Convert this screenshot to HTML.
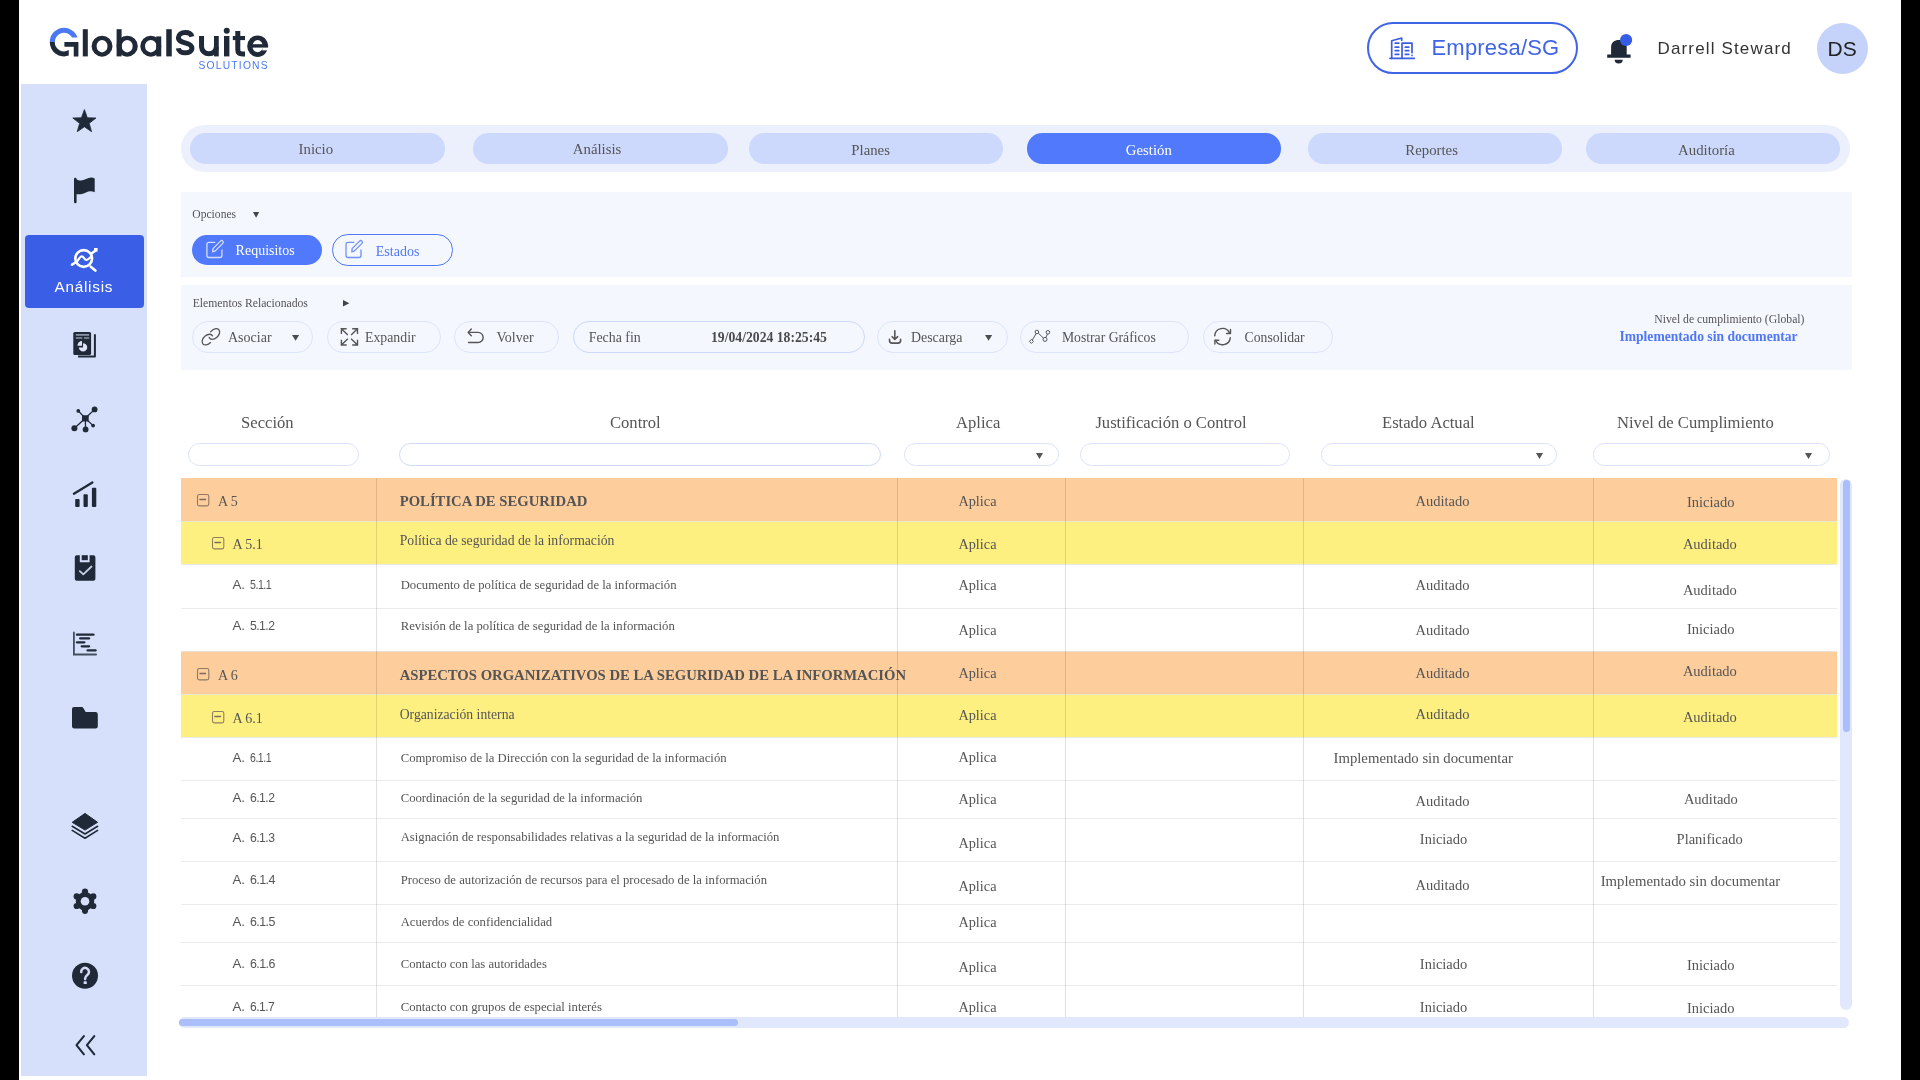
<!DOCTYPE html><html><head><meta charset="utf-8"><title>GlobalSuite</title><style>html,body{margin:0;padding:0;width:1920px;height:1080px;overflow:hidden;background:#fff;position:relative;}body{font-family:"Liberation Sans",sans-serif;}</style></head><body><div style="position:absolute;left:0;top:0;width:1920px;height:1080px;will-change:transform;"><div style="position:absolute;left:0px;top:0px;width:19px;height:1080px;background:#000;"></div>
<div style="position:absolute;left:1901px;top:0px;width:19px;height:1080px;background:#000;"></div>
<svg style="position:absolute;left:40px;top:20px;" width="240" height="45" viewBox="40 20 240 45"><path d="M49.75 42.1 A14.3 14.3 0 0 1 77.62 37.6 L72.19 37.6 A9.3 9.3 0 0 0 54.75 42.1 Z" fill="#4a78f5"/><path d="M49.75 42.1 A14.3 14.3 0 0 0 68.75 55.6 L68.75 50.1 A9.3 9.3 0 0 1 54.75 42.1 Z" fill="#1f2937"/><path d="M64.4 42.1 H78.4 V56.4 H73.75 V46.7 H64.4 Z" fill="#1f2937"/><rect x="82.8" y="29.2" width="5" height="27.2" fill="#1f2937"/><path fill-rule="evenodd" d="M91.6 46.2 A10.45 10.5 0 1 0 112.5 46.2 A10.45 10.5 0 1 0 91.6 46.2 Z M96.6 46.2 A5.45 6.25 0 1 0 107.5 46.2 A5.45 6.25 0 1 0 96.6 46.2 Z " fill="#1f2937"/><rect x="116.6" y="29.2" width="5" height="27.2" fill="#1f2937"/><path fill-rule="evenodd" d="M116.60000000000001 46.2 A10.6 10.5 0 1 0 137.8 46.2 A10.6 10.5 0 1 0 116.60000000000001 46.2 Z M121.75 46.2 A5.45 6.25 0 1 0 132.65 46.2 A5.45 6.25 0 1 0 121.75 46.2 Z " fill="#1f2937"/><path fill-rule="evenodd" d="M140.3 46.2 A10.5 10.5 0 1 0 161.3 46.2 A10.5 10.5 0 1 0 140.3 46.2 Z M145.0 46.2 A5.8 6.25 0 1 0 156.60000000000002 46.2 A5.8 6.25 0 1 0 145.0 46.2 Z " fill="#1f2937"/><rect x="156.25" y="36.4" width="5" height="20" fill="#1f2937"/><rect x="166.25" y="29.2" width="5.5" height="27.2" fill="#1f2937"/><path d="M191.9 36.6 C191.2 34 188.5 32.6 185.2 32.6 C181.3 32.6 178.4 34.6 178.4 37.6 C178.4 41.2 181.8 42 185.2 42.9 C188.8 43.8 191.9 45 191.9 48.3 C191.9 51.2 189.1 52.8 185.2 52.8 C181.5 52.8 178.6 51 178.3 48.3" fill="none" stroke="#1f2937" stroke-width="5"/><path d="M201.55 36 V47 A7.42 7.2 0 0 0 216.37 47" fill="none" stroke="#1f2937" stroke-width="5"/><rect x="214" y="36" width="4.75" height="20.4" fill="#1f2937"/><rect x="224" y="36" width="5.4" height="20.4" fill="#1f2937"/><circle cx="226.75" cy="30.75" r="3" fill="#1f2937"/><path d="M237.8 31 V49.5 C237.8 53 239.5 53.9 242.5 53.9 H245" fill="none" stroke="#1f2937" stroke-width="5"/><rect x="232.8" y="36" width="12.2" height="4.1" fill="#1f2937"/><path fill-rule="evenodd" d="M247.2 46.2 A10.45 10.8 0 1 0 268.09999999999997 46.2 A10.45 10.8 0 1 0 247.2 46.2 Z M252.45 46.2 A5.2 6.1 0 1 0 262.84999999999997 46.2 A5.2 6.1 0 1 0 252.45 46.2 Z " fill="#1f2937"/><rect x="252" y="44.2" width="16.1" height="3.4" fill="#1f2937"/><rect x="262.3" y="47.6" width="7" height="2.8" fill="#fff"/></svg>
<div style="position:absolute;left:198.5px;top:61.1px;font-family:'Liberation Sans', sans-serif;font-size:10.3px;line-height:10.3px;font-weight:normal;color:#4a78f5;white-space:nowrap;letter-spacing:1.2px;">SOLUTIONS</div>
<div style="position:absolute;left:1367px;top:22px;width:207px;height:48px;border:2px solid #3f64e6;border-radius:26px;"></div>
<svg style="position:absolute;left:1385px;top:34px;" width="34" height="28" viewBox="1385 34 34 28"><g fill="none" stroke="#3a5de4" stroke-width="1.7" stroke-linecap="round" stroke-linejoin="round"><path d="M1390 58.3 H1414.3"/><path d="M1391.7 58.3 V40.7 L1401.7 38 V40.3"/><path d="M1402 58.3 V43.2 H1412 V52.7"/><path d="M1395.2 43.2 H1398.8 M1395.2 47.2 H1398.8 M1395.2 50.7 H1398.8 M1395.2 54.3 H1398.8"/><path d="M1405.3 47.2 H1408.8 M1405.3 50.7 H1408.8 M1405.3 54.3 H1408.8"/><path d="M1412 55.4 V55.5"/></g></svg>
<div style="position:absolute;left:1431.5px;top:36.66px;font-family:'Liberation Sans', sans-serif;font-size:22px;line-height:22px;font-weight:normal;color:#3f64e6;white-space:nowrap;letter-spacing:0.2px;">Empresa/SG</div>
<svg style="position:absolute;left:1600px;top:30px;" width="40" height="40" viewBox="1600 30 40 40"><path d="M1611.1 54.4 V47 C1611.1 42.5 1614.5 40 1618.9 40 C1623.3 40 1626.7 42.5 1626.7 47 V54.4 H1630.6 V57.8 H1607.2 V54.4 Z" fill="#1f2937"/><path d="M1614.6 59.8 H1622.8 A4.1 3.7 0 0 1 1614.6 59.8 Z" fill="#1f2937"/><circle cx="1626.1" cy="40" r="6.1" fill="#365de5"/></svg>
<div style="position:absolute;left:1657.5px;top:39.63px;font-family:'Liberation Sans', sans-serif;font-size:17px;line-height:17px;font-weight:normal;color:#333;white-space:nowrap;letter-spacing:1.15px;">Darrell Steward</div>
<div style="position:absolute;left:1816.5px;top:22.5px;width:51.5px;height:51.5px;border-radius:50%;background:#c5d3fb;"></div>
<div style="position:absolute;left:1827.5px;top:38.05px;font-family:'Liberation Sans', sans-serif;font-size:21px;line-height:21px;font-weight:normal;color:#222;white-space:nowrap;letter-spacing:0px;">DS</div>
<div style="position:absolute;left:21px;top:84px;width:126.3px;height:992.4px;background:#d6e0fb;"></div>
<div style="position:absolute;left:24.8px;top:235.3px;width:119.2px;height:73.1px;background:#3a5ee6;border-radius:4px;"></div>
<svg style="position:absolute;left:21px;top:84px;" width="127" height="993" viewBox="21 84 127 993"><polygon points="84.40,109.60 87.34,117.75 96.00,118.03 89.16,123.35 91.57,131.67 84.40,126.80 77.23,131.67 79.64,123.35 72.80,118.03 81.46,117.75" fill="#1f2937" stroke="#1f2937" stroke-width="0.8" stroke-linejoin="round"/><path d="M75.3 202 V179" stroke="#1f2937" stroke-width="2.6" stroke-linecap="round"/><path d="M75.3 178.4 C79 181.5 83 180.5 86 179 C89 177.5 92 177 94.7 178.4 V192.3 C92 191 89 191 86 192.5 C83 194 79 195 75.3 193.7 Z" fill="#1f2937"/><g fill="none" stroke="#fff" stroke-width="2.6" stroke-linecap="round" stroke-linejoin="round"><circle cx="83.7" cy="258.5" r="8.4"/><path d="M72 264.6 L75.5 262.5"/><path d="M91.5 253.5 L95 251"/><path d="M90.7 266.7 L95.4 270.6"/></g><path d="M76.8 262 C78.5 259.5 80 256.3 81.8 256.3 C83.6 256.3 84.5 260 86.2 260 C88 260 89.5 258 91.3 256.6" fill="none" stroke="#fff" stroke-width="2.2" stroke-linecap="round"/><rect x="94" y="248" width="3.6" height="3.6" fill="#fff"/><rect x="73.3" y="331.9" width="17.8" height="23.1" rx="1.6" fill="#1f2937"/><path d="M78 356.6 H94.9 V334.3" fill="none" stroke="#1f2937" stroke-width="2" stroke-linejoin="round"/><path d="M75.8 334.8 H89.2 M75.8 338 H82.3 M84 338 H89.2" stroke="#8c93a8" stroke-width="1.7"/><path d="M83.05 343.2 A4.2 4.2 0 1 1 78.85 347.4 L83.05 347.4 Z" fill="#dfe3fb"/><path d="M82 345.7 L77.4 345.7 A4.6 4.6 0 0 1 82 341.1 Z" fill="#dfe3fb"/><g fill="none" stroke="#1f2937" stroke-width="1.3"><path d="M78.3 410.9 L85.3 418.3 L94.6 409.4 M74.4 428.3 L85.3 418.3 L85.6 429.4 M85.3 418.3 L93.1 425.6"/></g><g fill="#1f2937"><rect x="82" y="415.2" width="6.7" height="6.3" rx="1"/><circle cx="78.3" cy="410.9" r="1.9"/><circle cx="94.6" cy="409.4" r="2.9"/><circle cx="74.4" cy="428.3" r="3"/><circle cx="85.6" cy="429.4" r="2.9"/><circle cx="93.1" cy="425.6" r="1.9"/></g><g fill="#1f2937"><rect x="75.2" y="499.1" width="4.4" height="7.8" rx="1"/><rect x="83.5" y="494.3" width="4.3" height="12.6" rx="1"/><rect x="91.9" y="487.8" width="4.4" height="19.1" rx="1"/></g><path d="M73.9 493.7 L92.4 482.4" stroke="#1f2937" stroke-width="2.3" stroke-linecap="round"/><path d="M76.8 555.2 H79.8 V562.3 H89.6 V555.2 H93.4 A2 2 0 0 1 95.4 557.2 V578.8 A2 2 0 0 1 93.4 580.8 H76.8 A2 2 0 0 1 74.8 578.8 V557.2 A2 2 0 0 1 76.8 555.2 Z" fill="#1f2937"/><rect x="81.7" y="555.2" width="6.1" height="5" fill="#1f2937"/><path d="M79.8 571.1 L83.3 574.3 L91.5 566.5" fill="none" stroke="#c9cfe3" stroke-width="1.8" stroke-linecap="round" stroke-linejoin="round"/><g fill="none" stroke="#1f2937" stroke-linecap="round"><path d="M73.9 632.3 V654.5 H96.1" stroke-width="1.8" stroke-opacity="0.8"/><path d="M76.9 634.7 H93.5 M80.2 638.4 H89.1 M76.9 642.3 H84.4 M81.7 646.3 H89.1 M87.6 650.4 H95.6" stroke-width="2.3"/></g><path d="M74 707.1 H81.5 C82.5 707.1 83 707.5 83.6 708.5 L85.7 712.1 H95.5 A2.3 2.3 0 0 1 97.8 714.4 V726.3 A2.3 2.3 0 0 1 95.5 728.6 H74.3 A2.3 2.3 0 0 1 72 726.3 V709.1 A2 2 0 0 1 74 707.1 Z" fill="#1f2937"/><path d="M85 813.4 L97.6 822.3 L85 830.1 L72.2 822.3 Z" fill="#1f2937" stroke="#1f2937" stroke-width="1" stroke-linejoin="round"/><path d="M72.2 826.3 L85 834 L97.6 826.3 M72.2 830.4 L85 838.2 L97.6 830.4" fill="none" stroke="#1f2937" stroke-width="1.6" stroke-linecap="round" stroke-linejoin="round"/><g fill="#1f2937"><circle cx="85" cy="901.2" r="9.2"/><circle cx="85.00" cy="891.60" r="3.1"/><circle cx="93.31" cy="896.40" r="3.1"/><circle cx="93.31" cy="906.00" r="3.1"/><circle cx="85.00" cy="910.80" r="3.1"/><circle cx="76.69" cy="906.00" r="3.1"/><circle cx="76.69" cy="896.40" r="3.1"/></g><circle cx="85" cy="901.2" r="4.3" fill="#d6e0fb"/><circle cx="85" cy="975.8" r="13" fill="#1f2937"/><path d="M81.2 972 A3.9 3.9 0 1 1 87.3 975 C85.6 976.2 85.1 977.2 85.1 979" fill="none" stroke="#d6dcf5" stroke-width="2.5" stroke-linecap="round"/><rect x="83.6" y="981.2" width="3.2" height="2.8" rx="0.6" fill="#d6dcf5"/><path d="M83.9 1036.1 L76.5 1045.2 L83.9 1054.3 M94.3 1036.1 L86.9 1045.2 L94.3 1054.3" fill="none" stroke="#1f2937" stroke-width="2.1" stroke-linecap="round" stroke-linejoin="round"/></svg>
<div style="position:absolute;left:54.5px;top:279.37px;font-family:'Liberation Sans', sans-serif;font-size:15.3px;line-height:15.3px;font-weight:normal;color:#fff;white-space:nowrap;letter-spacing:0.75px;">Análisis</div>
<div style="position:absolute;left:180.5px;top:125px;width:1669.0px;height:47px;background:#ecf0fd;border-radius:23.5px;"></div>
<div style="position:absolute;left:190.3px;top:133px;width:254.7px;height:30.7px;background:#cdd9fc;border-radius:15.349999999999994px;"></div>
<div style="position:absolute;left:298.6px;top:142.06px;font-family:'Liberation Serif', serif;font-size:14.8px;line-height:14.8px;font-weight:normal;color:#555;white-space:nowrap;">Inicio</div>
<div style="position:absolute;left:473.4px;top:133px;width:254.6px;height:30.7px;background:#cdd9fc;border-radius:15.349999999999994px;"></div>
<div style="position:absolute;left:572.8px;top:141.76px;font-family:'Liberation Serif', serif;font-size:14.8px;line-height:14.8px;font-weight:normal;color:#555;white-space:nowrap;">Análisis</div>
<div style="position:absolute;left:748.7px;top:133px;width:254.6px;height:30.7px;background:#cdd9fc;border-radius:15.349999999999994px;"></div>
<div style="position:absolute;left:851.3px;top:142.86px;font-family:'Liberation Serif', serif;font-size:14.8px;line-height:14.8px;font-weight:normal;color:#555;white-space:nowrap;">Planes</div>
<div style="position:absolute;left:1026.8px;top:133px;width:254.5px;height:30.7px;background:#5079fb;border-radius:15.349999999999994px;"></div>
<div style="position:absolute;left:1125.8px;top:142.86px;font-family:'Liberation Serif', serif;font-size:14.8px;line-height:14.8px;font-weight:normal;color:#fff;white-space:nowrap;">Gestión</div>
<div style="position:absolute;left:1307.5px;top:133px;width:254.3px;height:30.7px;background:#cdd9fc;border-radius:15.349999999999994px;"></div>
<div style="position:absolute;left:1405.3px;top:142.86px;font-family:'Liberation Serif', serif;font-size:14.8px;line-height:14.8px;font-weight:normal;color:#555;white-space:nowrap;">Reportes</div>
<div style="position:absolute;left:1585.5px;top:133px;width:254.3px;height:30.7px;background:#cdd9fc;border-radius:15.349999999999994px;"></div>
<div style="position:absolute;left:1678.1px;top:143.36px;font-family:'Liberation Serif', serif;font-size:14.8px;line-height:14.8px;font-weight:normal;color:#555;white-space:nowrap;">Auditoría</div>
<div style="position:absolute;left:180.8px;top:192px;width:1670.9px;height:84.9px;background:#f4f7fe;"></div>
<div style="position:absolute;left:192.3px;top:208.59px;font-family:'Liberation Serif', serif;font-size:11.6px;line-height:11.6px;font-weight:normal;color:#555;white-space:nowrap;">Opciones</div>
<svg style="position:absolute;left:251.70000000000002px;top:211px;" width="8.2" height="7.8" viewBox="251.70000000000002 211 8.2 7.8"><path d="M252.70000000000002 212 H258.90000000000003 L255.8 217.8 Z" fill="#444"/></svg>
<div style="position:absolute;left:191.9px;top:234.7px;width:129.7px;height:30.3px;background:#5079fb;border-radius:15.150000000000006px;"></div>
<svg style="position:absolute;left:200px;top:234px;" width="30" height="30" viewBox="200 234 30 30"><g fill="none" stroke="#fff" stroke-opacity="0.75" stroke-width="1.3" stroke-linecap="round" stroke-linejoin="round"><path d="M214.7 242.3 H209 A2.1 2.1 0 0 0 206.9 244.4 V255.4 A2.1 2.1 0 0 0 209 257.5 H219.8 A2.1 2.1 0 0 0 221.9 255.4 V249.8"/><path d="M212.7 251.9 L213 248.6 L220.5 241.1 A1.6 1.6 0 0 1 222.8 243.4 L215.3 250.9 Z"/></g></svg>
<div style="position:absolute;left:235.6px;top:243.72px;font-family:'Liberation Serif', serif;font-size:14.0px;line-height:14.0px;font-weight:normal;color:#fff;white-space:nowrap;transform:scaleY(1.05);transform-origin:0 100%;">Requisitos</div>
<div style="position:absolute;left:331.7px;top:234.2px;width:121.1px;height:31.6px;background:transparent;border-radius:15.800000000000011px;border:1px solid #4f77f6;box-sizing:border-box;"></div>
<svg style="position:absolute;left:339px;top:234px;" width="30" height="30" viewBox="339 234 30 30"><g fill="none" stroke="#4f77f6" stroke-opacity="0.8" stroke-width="1.3" stroke-linecap="round" stroke-linejoin="round"><path d="M353.8 242.3 H348.1 A2.1 2.1 0 0 0 346 244.4 V255.4 A2.1 2.1 0 0 0 348.1 257.5 H358.9 A2.1 2.1 0 0 0 361 255.4 V249.8"/><path d="M351.8 251.9 L352.1 248.6 L359.6 241.1 A1.6 1.6 0 0 1 361.9 243.4 L354.4 250.9 Z"/></g></svg>
<div style="position:absolute;left:375.8px;top:244.52px;font-family:'Liberation Serif', serif;font-size:14.0px;line-height:14.0px;font-weight:normal;color:#4f77f6;white-space:nowrap;transform:scaleY(1.05);transform-origin:0 100%;">Estados</div>
<div style="position:absolute;left:180.8px;top:284.8px;width:1670.9px;height:85.0px;background:#f4f7fe;"></div>
<div style="position:absolute;left:192.7px;top:297.71px;font-family:'Liberation Serif', serif;font-size:11.7px;line-height:11.7px;font-weight:normal;color:#555;white-space:nowrap;">Elementos Relacionados</div>
<svg style="position:absolute;left:342.3px;top:299.35px;" width="8.3" height="8.5" viewBox="342.3 299.35 8.3 8.5"><path d="M343.3 300.35 V306.85 L349.6 303.6 Z" fill="#444"/></svg>
<div style="position:absolute;left:191.7px;top:320.9px;width:121.5px;height:32.1px;background:transparent;border-radius:16.05000000000001px;border:1px solid #dde5fc;box-sizing:border-box;"></div>
<svg style="position:absolute;left:196px;top:320px;" width="30" height="30" viewBox="196 320 30 30"><g fill="none" stroke="#555" stroke-width="1.3" stroke-linecap="round"><path d="M210.6 331.85 A6.3 4.2 -45 1 1 209.2 337.46"/><path d="M212.47 335.86 A6.3 4.2 -45 1 0 210.47 342.57"/></g></svg>
<div style="position:absolute;left:228px;top:330.52px;font-family:'Liberation Serif', serif;font-size:14.0px;line-height:14.0px;font-weight:normal;color:#555;white-space:nowrap;">Asociar</div>
<svg style="position:absolute;left:291.09999999999997px;top:333.8px;" width="9.2" height="7.8" viewBox="291.09999999999997 333.8 9.2 7.8"><path d="M292.09999999999997 334.8 H299.3 L295.7 340.6 Z" fill="#4d4d4d"/></svg>
<div style="position:absolute;left:326.7px;top:320.9px;width:114.0px;height:32.1px;background:transparent;border-radius:16.05000000000001px;border:1px solid #dde5fc;box-sizing:border-box;"></div>
<svg style="position:absolute;left:335px;top:322px;" width="30" height="30" viewBox="335 322 30 30"><g fill="none" stroke="#555" stroke-width="1.4" stroke-linecap="square"><path d="M341.4 333.3 V328.7 H346 M341.4 328.7 L347.3 334.5"/><path d="M357.5 333.3 V328.7 H352.9 M357.5 328.7 L351.6 334.5"/><path d="M341.4 340.4 V345 H346 M341.4 345 L347.3 339.2"/><path d="M357.5 340.4 V345 H352.9 M357.5 345 L351.6 339.2"/></g></svg>
<div style="position:absolute;left:365px;top:330.68px;font-family:'Liberation Serif', serif;font-size:13.8px;line-height:13.8px;font-weight:normal;color:#555;white-space:nowrap;">Expandir</div>
<div style="position:absolute;left:454.2px;top:320.9px;width:104.4px;height:32.1px;background:transparent;border-radius:16.05000000000001px;border:1px solid #dde5fc;box-sizing:border-box;"></div>
<svg style="position:absolute;left:462px;top:322px;" width="28" height="28" viewBox="462 322 28 28"><g fill="none" stroke="#555" stroke-width="1.4" stroke-linecap="round" stroke-linejoin="round"><path d="M471.3 329 L468.2 332.4 L471.3 335.7"/><path d="M468.5 332.4 H478.1 A5 5 0 0 1 478.1 342.5 H468.5"/></g></svg>
<div style="position:absolute;left:496.5px;top:330.52px;font-family:'Liberation Serif', serif;font-size:14.0px;line-height:14.0px;font-weight:normal;color:#555;white-space:nowrap;">Volver</div>
<div style="position:absolute;left:573.2px;top:320.9px;width:291.8px;height:32.1px;background:transparent;border-radius:16.05000000000001px;border:1px solid #cdd8fb;box-sizing:border-box;"></div>
<div style="position:absolute;left:588.7px;top:330.5px;font-family:'Liberation Serif', serif;font-size:13.9px;line-height:13.9px;font-weight:normal;color:#555;white-space:nowrap;">Fecha fin</div>
<div style="position:absolute;left:711px;top:330.67px;font-family:'Liberation Serif', serif;font-size:13.7px;line-height:13.7px;font-weight:bold;color:#4a4a4a;white-space:nowrap;">19/04/2024 18:25:45</div>
<div style="position:absolute;left:877.4px;top:320.9px;width:130.6px;height:32.1px;background:transparent;border-radius:16.05000000000001px;border:1px solid #dde5fc;box-sizing:border-box;"></div>
<svg style="position:absolute;left:882px;top:323px;" width="26" height="26" viewBox="882 323 26 26"><g fill="none" stroke="#555" stroke-width="1.6" stroke-linecap="round" stroke-linejoin="round"><path d="M894.8 330.7 V339.2 M892.1 336.7 L894.8 339.4 L897.7 336.7"/><path d="M889.5 339.4 V340.5 A2.6 2.6 0 0 0 892.1 343.1 H898 A2.6 2.6 0 0 0 900.6 340.5 V339.4"/></g></svg>
<div style="position:absolute;left:911px;top:330.6px;font-family:'Liberation Serif', serif;font-size:13.9px;line-height:13.9px;font-weight:normal;color:#555;white-space:nowrap;">Descarga</div>
<svg style="position:absolute;left:983.8px;top:333.8px;" width="9.2" height="7.8" viewBox="983.8 333.8 9.2 7.8"><path d="M984.8 334.8 H992.0 L988.4 340.6 Z" fill="#4d4d4d"/></svg>
<div style="position:absolute;left:1020.3px;top:320.9px;width:168.4px;height:32.1px;background:transparent;border-radius:16.05000000000001px;border:1px solid #dde5fc;box-sizing:border-box;"></div>
<svg style="position:absolute;left:1025px;top:323px;" width="30" height="26" viewBox="1025 323 30 26"><g fill="none" stroke="#555" stroke-width="1" stroke-linejoin="round"><path d="M1032.4 340 L1035.9 333.8 M1038.4 333.2 L1043.6 338.3 M1045.9 337.5 L1047.4 334.1"/><path d="M1031.4 339.4 L1033.4 341.4 L1031.4 343.4 L1029.4 341.4 Z"/><circle cx="1036.9" cy="332" r="1.8"/><circle cx="1045" cy="339.4" r="2"/><circle cx="1047.9" cy="332.3" r="1.8"/></g></svg>
<div style="position:absolute;left:1061.9px;top:330.77px;font-family:'Liberation Serif', serif;font-size:13.7px;line-height:13.7px;font-weight:normal;color:#555;white-space:nowrap;">Mostrar Gráficos</div>
<div style="position:absolute;left:1202.5px;top:320.9px;width:130.8px;height:32.1px;background:transparent;border-radius:16.05000000000001px;border:1px solid #dde5fc;box-sizing:border-box;"></div>
<svg style="position:absolute;left:1208px;top:322px;" width="30" height="30" viewBox="1208 322 30 30"><g fill="none" stroke="#555" stroke-width="1.4" stroke-linecap="round" stroke-linejoin="round"><path d="M1214.7 335.9 A7.8 7.8 0 0 1 1229.4 332.6"/><path d="M1230.5 329.5 V333.5 H1226.6"/><path d="M1230.3 337.6 A7.8 7.8 0 0 1 1215.5 340.3"/><path d="M1218.8 340.2 H1214.9 V344"/></g></svg>
<div style="position:absolute;left:1244.6px;top:330.77px;font-family:'Liberation Serif', serif;font-size:13.7px;line-height:13.7px;font-weight:normal;color:#555;white-space:nowrap;">Consolidar</div>
<div style="position:absolute;left:1654.2px;top:313.71px;font-family:'Liberation Serif', serif;font-size:11.7px;line-height:11.7px;font-weight:normal;color:#555;white-space:nowrap;">Nivel de cumplimiento (Global)</div>
<div style="position:absolute;left:1619.4px;top:330.35px;font-family:'Liberation Serif', serif;font-size:13.6px;line-height:13.6px;font-weight:bold;color:#4f77f6;white-space:nowrap;">Implementado sin documentar</div>
<div style="position:absolute;left:241.1px;top:415.49px;font-family:'Liberation Serif', serif;font-size:16.6px;line-height:16.6px;font-weight:normal;color:#555;white-space:nowrap;">Sección</div>
<div style="position:absolute;left:610px;top:415.49px;font-family:'Liberation Serif', serif;font-size:16.6px;line-height:16.6px;font-weight:normal;color:#555;white-space:nowrap;">Control</div>
<div style="position:absolute;left:956.1px;top:415.49px;font-family:'Liberation Serif', serif;font-size:16.6px;line-height:16.6px;font-weight:normal;color:#555;white-space:nowrap;">Aplica</div>
<div style="position:absolute;left:1095.4px;top:415.49px;font-family:'Liberation Serif', serif;font-size:16.6px;line-height:16.6px;font-weight:normal;color:#555;white-space:nowrap;">Justificación o Control</div>
<div style="position:absolute;left:1382px;top:415.49px;font-family:'Liberation Serif', serif;font-size:16.6px;line-height:16.6px;font-weight:normal;color:#555;white-space:nowrap;">Estado Actual</div>
<div style="position:absolute;left:1617px;top:415.49px;font-family:'Liberation Serif', serif;font-size:16.6px;line-height:16.6px;font-weight:normal;color:#555;white-space:nowrap;">Nivel de Cumplimiento</div>
<div style="position:absolute;left:187.8px;top:443.2px;width:171.1px;height:23.2px;background:#fff;border-radius:11.599999999999994px;border:1px solid #dbe3fc;box-sizing:border-box;"></div>
<div style="position:absolute;left:399.2px;top:443.2px;width:481.8px;height:23.2px;background:#fff;border-radius:11.599999999999994px;border:1px solid #cfdafb;box-sizing:border-box;"></div>
<div style="position:absolute;left:904px;top:443.2px;width:154.6px;height:23.2px;background:#fff;border-radius:11.599999999999994px;border:1px solid #dbe3fc;box-sizing:border-box;"></div>
<svg style="position:absolute;left:1035.0px;top:451.5px;" width="9" height="8" viewBox="1035.0 451.5 9 8"><path d="M1036.0 452.5 H1043.0 L1039.5 458.5 Z" fill="#555"/></svg>
<div style="position:absolute;left:1080px;top:443.2px;width:210px;height:23.2px;background:#fff;border-radius:11.599999999999994px;border:1px solid #dbe3fc;box-sizing:border-box;"></div>
<div style="position:absolute;left:1321.2px;top:443.2px;width:235.8px;height:23.2px;background:#fff;border-radius:11.599999999999994px;border:1px solid #dbe3fc;box-sizing:border-box;"></div>
<svg style="position:absolute;left:1535.0px;top:451.5px;" width="9" height="8" viewBox="1535.0 451.5 9 8"><path d="M1536.0 452.5 H1543.0 L1539.5 458.5 Z" fill="#555"/></svg>
<div style="position:absolute;left:1593.3px;top:443.2px;width:236.3px;height:23.2px;background:#fff;border-radius:11.599999999999994px;border:1px solid #dbe3fc;box-sizing:border-box;"></div>
<svg style="position:absolute;left:1804.3px;top:451.5px;" width="9" height="8" viewBox="1804.3 451.5 9 8"><path d="M1805.3 452.5 H1812.3 L1808.8 458.5 Z" fill="#555"/></svg>
<div style="position:absolute;left:181px;top:478px;width:1655.5px;height:43px;background:#fdcd9c;"></div>
<div style="position:absolute;left:181px;top:521px;width:1655.5px;height:43px;background:#fef080;"></div>
<div style="position:absolute;left:181px;top:651px;width:1655.5px;height:43px;background:#fdcd9c;"></div>
<div style="position:absolute;left:181px;top:694px;width:1655.5px;height:43px;background:#fef080;"></div>
<div style="position:absolute;left:181px;top:521px;width:1655.5px;height:1px;background:rgba(228,228,228,0.75);"></div>
<div style="position:absolute;left:181px;top:564px;width:1655.5px;height:1px;background:rgba(228,228,228,0.75);"></div>
<div style="position:absolute;left:181px;top:608px;width:1655.5px;height:1px;background:rgba(228,228,228,0.75);"></div>
<div style="position:absolute;left:181px;top:651px;width:1655.5px;height:1px;background:rgba(228,228,228,0.75);"></div>
<div style="position:absolute;left:181px;top:694px;width:1655.5px;height:1px;background:rgba(228,228,228,0.75);"></div>
<div style="position:absolute;left:181px;top:737px;width:1655.5px;height:1px;background:rgba(228,228,228,0.75);"></div>
<div style="position:absolute;left:181px;top:780px;width:1655.5px;height:1px;background:rgba(228,228,228,0.75);"></div>
<div style="position:absolute;left:181px;top:818px;width:1655.5px;height:1px;background:rgba(228,228,228,0.75);"></div>
<div style="position:absolute;left:181px;top:861px;width:1655.5px;height:1px;background:rgba(228,228,228,0.75);"></div>
<div style="position:absolute;left:181px;top:904px;width:1655.5px;height:1px;background:rgba(228,228,228,0.75);"></div>
<div style="position:absolute;left:181px;top:942px;width:1655.5px;height:1px;background:rgba(228,228,228,0.75);"></div>
<div style="position:absolute;left:181px;top:985px;width:1655.5px;height:1px;background:rgba(228,228,228,0.75);"></div>
<div style="position:absolute;left:376px;top:478px;width:1px;height:539px;background:rgba(0,0,0,0.12);"></div>
<div style="position:absolute;left:897px;top:478px;width:1px;height:539px;background:rgba(0,0,0,0.12);"></div>
<div style="position:absolute;left:1065px;top:478px;width:1px;height:539px;background:rgba(0,0,0,0.12);"></div>
<div style="position:absolute;left:1303px;top:478px;width:1px;height:539px;background:rgba(0,0,0,0.12);"></div>
<div style="position:absolute;left:1593px;top:478px;width:1px;height:539px;background:rgba(0,0,0,0.12);"></div>
<svg style="position:absolute;left:196.3px;top:493.3px;" width="14" height="14" viewBox="196.3 493.3 14 14"><rect x="197.8" y="494.8" width="11.3" height="11.4" rx="1.8" fill="none" stroke="#7d6b5a" stroke-opacity="0.85" stroke-width="1.1"/><path d="M200.20000000000002 499.8 H205.9" stroke="#7d6b5a" stroke-width="1.3" stroke-linecap="round"/></svg>
<div style="position:absolute;left:218px;top:494.72px;font-family:'Liberation Serif', serif;font-size:14.0px;line-height:14.0px;font-weight:normal;color:#555;white-space:nowrap;">A 5</div>
<svg style="position:absolute;left:210.8px;top:535.8px;" width="14" height="14" viewBox="210.8 535.8 14 14"><rect x="212.3" y="537.3" width="11.3" height="11.4" rx="1.8" fill="none" stroke="#7d6b5a" stroke-opacity="0.85" stroke-width="1.1"/><path d="M214.70000000000002 542.3 H220.4" stroke="#7d6b5a" stroke-width="1.3" stroke-linecap="round"/></svg>
<div style="position:absolute;left:232.5px;top:537.72px;font-family:'Liberation Serif', serif;font-size:14.0px;line-height:14.0px;font-weight:normal;color:#555;white-space:nowrap;">A 5.1</div>
<div style="position:absolute;left:232.5px;top:577.86px;font-family:'Liberation Sans', sans-serif;font-size:13.3px;line-height:13.3px;font-weight:normal;color:#555;white-space:nowrap;">A.</div>
<div style="position:absolute;left:250.2px;top:577.86px;font-family:'Liberation Sans', sans-serif;font-size:13.3px;line-height:13.3px;font-weight:normal;color:#555;white-space:nowrap;letter-spacing:-0.6px;transform:scaleX(0.800);transform-origin:0 0;">5.1.1</div>
<div style="position:absolute;left:232.5px;top:619.26px;font-family:'Liberation Sans', sans-serif;font-size:13.3px;line-height:13.3px;font-weight:normal;color:#555;white-space:nowrap;">A.</div>
<div style="position:absolute;left:250.2px;top:619.26px;font-family:'Liberation Sans', sans-serif;font-size:13.3px;line-height:13.3px;font-weight:normal;color:#555;white-space:nowrap;letter-spacing:-0.6px;transform:scaleX(0.919);transform-origin:0 0;">5.1.2</div>
<div style="position:absolute;left:232.5px;top:750.96px;font-family:'Liberation Sans', sans-serif;font-size:13.3px;line-height:13.3px;font-weight:normal;color:#555;white-space:nowrap;">A.</div>
<div style="position:absolute;left:250.2px;top:750.96px;font-family:'Liberation Sans', sans-serif;font-size:13.3px;line-height:13.3px;font-weight:normal;color:#555;white-space:nowrap;letter-spacing:-0.6px;transform:scaleX(0.792);transform-origin:0 0;">6.1.1</div>
<div style="position:absolute;left:232.5px;top:791.36px;font-family:'Liberation Sans', sans-serif;font-size:13.3px;line-height:13.3px;font-weight:normal;color:#555;white-space:nowrap;">A.</div>
<div style="position:absolute;left:250.2px;top:791.36px;font-family:'Liberation Sans', sans-serif;font-size:13.3px;line-height:13.3px;font-weight:normal;color:#555;white-space:nowrap;letter-spacing:-0.6px;transform:scaleX(0.919);transform-origin:0 0;">6.1.2</div>
<div style="position:absolute;left:232.5px;top:830.76px;font-family:'Liberation Sans', sans-serif;font-size:13.3px;line-height:13.3px;font-weight:normal;color:#555;white-space:nowrap;">A.</div>
<div style="position:absolute;left:250.2px;top:830.76px;font-family:'Liberation Sans', sans-serif;font-size:13.3px;line-height:13.3px;font-weight:normal;color:#555;white-space:nowrap;letter-spacing:-0.6px;transform:scaleX(0.919);transform-origin:0 0;">6.1.3</div>
<div style="position:absolute;left:232.5px;top:872.96px;font-family:'Liberation Sans', sans-serif;font-size:13.3px;line-height:13.3px;font-weight:normal;color:#555;white-space:nowrap;">A.</div>
<div style="position:absolute;left:250.2px;top:872.96px;font-family:'Liberation Sans', sans-serif;font-size:13.3px;line-height:13.3px;font-weight:normal;color:#555;white-space:nowrap;letter-spacing:-0.6px;transform:scaleX(0.935);transform-origin:0 0;">6.1.4</div>
<div style="position:absolute;left:232.5px;top:915.16px;font-family:'Liberation Sans', sans-serif;font-size:13.3px;line-height:13.3px;font-weight:normal;color:#555;white-space:nowrap;">A.</div>
<div style="position:absolute;left:250.2px;top:915.16px;font-family:'Liberation Sans', sans-serif;font-size:13.3px;line-height:13.3px;font-weight:normal;color:#555;white-space:nowrap;letter-spacing:-0.6px;transform:scaleX(0.935);transform-origin:0 0;">6.1.5</div>
<div style="position:absolute;left:232.5px;top:957.06px;font-family:'Liberation Sans', sans-serif;font-size:13.3px;line-height:13.3px;font-weight:normal;color:#555;white-space:nowrap;">A.</div>
<div style="position:absolute;left:250.2px;top:957.06px;font-family:'Liberation Sans', sans-serif;font-size:13.3px;line-height:13.3px;font-weight:normal;color:#555;white-space:nowrap;letter-spacing:-0.6px;transform:scaleX(0.935);transform-origin:0 0;">6.1.6</div>
<div style="position:absolute;left:232.5px;top:999.56px;font-family:'Liberation Sans', sans-serif;font-size:13.3px;line-height:13.3px;font-weight:normal;color:#555;white-space:nowrap;">A.</div>
<div style="position:absolute;left:250.2px;top:999.56px;font-family:'Liberation Sans', sans-serif;font-size:13.3px;line-height:13.3px;font-weight:normal;color:#555;white-space:nowrap;letter-spacing:-0.6px;transform:scaleX(0.908);transform-origin:0 0;">6.1.7</div>
<svg style="position:absolute;left:196.3px;top:666.8px;" width="14" height="14" viewBox="196.3 666.8 14 14"><rect x="197.8" y="668.3" width="11.3" height="11.4" rx="1.8" fill="none" stroke="#7d6b5a" stroke-opacity="0.85" stroke-width="1.1"/><path d="M200.20000000000002 673.3 H205.9" stroke="#7d6b5a" stroke-width="1.3" stroke-linecap="round"/></svg>
<div style="position:absolute;left:218px;top:668.52px;font-family:'Liberation Serif', serif;font-size:14.0px;line-height:14.0px;font-weight:normal;color:#555;white-space:nowrap;">A 6</div>
<svg style="position:absolute;left:210.8px;top:709.8px;" width="14" height="14" viewBox="210.8 709.8 14 14"><rect x="212.3" y="711.3" width="11.3" height="11.4" rx="1.8" fill="none" stroke="#7d6b5a" stroke-opacity="0.85" stroke-width="1.1"/><path d="M214.70000000000002 716.3 H220.4" stroke="#7d6b5a" stroke-width="1.3" stroke-linecap="round"/></svg>
<div style="position:absolute;left:232.5px;top:711.52px;font-family:'Liberation Serif', serif;font-size:14.0px;line-height:14.0px;font-weight:normal;color:#555;white-space:nowrap;">A 6.1</div>
<div style="position:absolute;left:399.7px;top:493.75px;font-family:'Liberation Serif', serif;font-size:14.7px;line-height:14.7px;font-weight:bold;color:#555;white-space:nowrap;">POLÍTICA DE SEGURIDAD</div>
<div style="position:absolute;left:399.7px;top:533.77px;font-family:'Liberation Serif', serif;font-size:13.7px;line-height:13.7px;font-weight:normal;color:#555;white-space:nowrap;">Política de seguridad de la información</div>
<div style="position:absolute;left:400.7px;top:579.19px;font-family:'Liberation Serif', serif;font-size:12.7px;line-height:12.7px;font-weight:normal;color:#555;white-space:nowrap;">Documento de política de seguridad de la información</div>
<div style="position:absolute;left:400.7px;top:620.09px;font-family:'Liberation Serif', serif;font-size:12.7px;line-height:12.7px;font-weight:normal;color:#555;white-space:nowrap;">Revisión de la política de seguridad de la información</div>
<div style="position:absolute;left:399.7px;top:668.25px;font-family:'Liberation Serif', serif;font-size:14.7px;line-height:14.7px;font-weight:bold;color:#555;white-space:nowrap;">ASPECTOS ORGANIZATIVOS DE LA SEGURIDAD DE LA INFORMACIÓN</div>
<div style="position:absolute;left:399.7px;top:707.87px;font-family:'Liberation Serif', serif;font-size:13.7px;line-height:13.7px;font-weight:normal;color:#555;white-space:nowrap;">Organización interna</div>
<div style="position:absolute;left:400.7px;top:751.59px;font-family:'Liberation Serif', serif;font-size:12.7px;line-height:12.7px;font-weight:normal;color:#555;white-space:nowrap;">Compromiso de la Dirección con la seguridad de la información</div>
<div style="position:absolute;left:400.7px;top:791.79px;font-family:'Liberation Serif', serif;font-size:12.7px;line-height:12.7px;font-weight:normal;color:#555;white-space:nowrap;">Coordinación de la seguridad de la información</div>
<div style="position:absolute;left:400.7px;top:830.69px;font-family:'Liberation Serif', serif;font-size:12.7px;line-height:12.7px;font-weight:normal;color:#555;white-space:nowrap;">Asignación de responsabilidades relativas a la seguridad de la información</div>
<div style="position:absolute;left:400.7px;top:874.49px;font-family:'Liberation Serif', serif;font-size:12.7px;line-height:12.7px;font-weight:normal;color:#555;white-space:nowrap;">Proceso de autorización de recursos para el procesado de la información</div>
<div style="position:absolute;left:400.7px;top:916.29px;font-family:'Liberation Serif', serif;font-size:12.7px;line-height:12.7px;font-weight:normal;color:#555;white-space:nowrap;">Acuerdos de confidencialidad</div>
<div style="position:absolute;left:400.7px;top:957.79px;font-family:'Liberation Serif', serif;font-size:12.7px;line-height:12.7px;font-weight:normal;color:#555;white-space:nowrap;">Contacto con las autoridades</div>
<div style="position:absolute;left:400.7px;top:1001.39px;font-family:'Liberation Serif', serif;font-size:12.7px;line-height:12.7px;font-weight:normal;color:#555;white-space:nowrap;">Contacto con grupos de especial interés</div>
<div style="position:absolute;left:958.4px;top:494.07px;font-family:'Liberation Serif', serif;font-size:14.3px;line-height:14.3px;font-weight:normal;color:#555;white-space:nowrap;">Aplica</div>
<div style="position:absolute;left:958.4px;top:537.37px;font-family:'Liberation Serif', serif;font-size:14.3px;line-height:14.3px;font-weight:normal;color:#555;white-space:nowrap;">Aplica</div>
<div style="position:absolute;left:958.4px;top:578.27px;font-family:'Liberation Serif', serif;font-size:14.3px;line-height:14.3px;font-weight:normal;color:#555;white-space:nowrap;">Aplica</div>
<div style="position:absolute;left:958.4px;top:623.07px;font-family:'Liberation Serif', serif;font-size:14.3px;line-height:14.3px;font-weight:normal;color:#555;white-space:nowrap;">Aplica</div>
<div style="position:absolute;left:958.4px;top:666.17px;font-family:'Liberation Serif', serif;font-size:14.3px;line-height:14.3px;font-weight:normal;color:#555;white-space:nowrap;">Aplica</div>
<div style="position:absolute;left:958.4px;top:708.27px;font-family:'Liberation Serif', serif;font-size:14.3px;line-height:14.3px;font-weight:normal;color:#555;white-space:nowrap;">Aplica</div>
<div style="position:absolute;left:958.4px;top:750.27px;font-family:'Liberation Serif', serif;font-size:14.3px;line-height:14.3px;font-weight:normal;color:#555;white-space:nowrap;">Aplica</div>
<div style="position:absolute;left:958.4px;top:792.27px;font-family:'Liberation Serif', serif;font-size:14.3px;line-height:14.3px;font-weight:normal;color:#555;white-space:nowrap;">Aplica</div>
<div style="position:absolute;left:958.4px;top:836.37px;font-family:'Liberation Serif', serif;font-size:14.3px;line-height:14.3px;font-weight:normal;color:#555;white-space:nowrap;">Aplica</div>
<div style="position:absolute;left:958.4px;top:879.17px;font-family:'Liberation Serif', serif;font-size:14.3px;line-height:14.3px;font-weight:normal;color:#555;white-space:nowrap;">Aplica</div>
<div style="position:absolute;left:958.4px;top:914.97px;font-family:'Liberation Serif', serif;font-size:14.3px;line-height:14.3px;font-weight:normal;color:#555;white-space:nowrap;">Aplica</div>
<div style="position:absolute;left:958.4px;top:959.77px;font-family:'Liberation Serif', serif;font-size:14.3px;line-height:14.3px;font-weight:normal;color:#555;white-space:nowrap;">Aplica</div>
<div style="position:absolute;left:958.4px;top:999.97px;font-family:'Liberation Serif', serif;font-size:14.3px;line-height:14.3px;font-weight:normal;color:#555;white-space:nowrap;">Aplica</div>
<div style="position:absolute;left:1415.5px;top:493.91px;font-family:'Liberation Serif', serif;font-size:14.5px;line-height:14.5px;font-weight:normal;color:#555;white-space:nowrap;">Auditado</div>
<div style="position:absolute;left:1415.5px;top:578.11px;font-family:'Liberation Serif', serif;font-size:14.5px;line-height:14.5px;font-weight:normal;color:#555;white-space:nowrap;">Auditado</div>
<div style="position:absolute;left:1415.5px;top:622.91px;font-family:'Liberation Serif', serif;font-size:14.5px;line-height:14.5px;font-weight:normal;color:#555;white-space:nowrap;">Auditado</div>
<div style="position:absolute;left:1415.5px;top:666.01px;font-family:'Liberation Serif', serif;font-size:14.5px;line-height:14.5px;font-weight:normal;color:#555;white-space:nowrap;">Auditado</div>
<div style="position:absolute;left:1415.5px;top:707.41px;font-family:'Liberation Serif', serif;font-size:14.5px;line-height:14.5px;font-weight:normal;color:#555;white-space:nowrap;">Auditado</div>
<div style="position:absolute;left:1333.5px;top:750.7px;font-family:'Liberation Serif', serif;font-size:14.75px;line-height:14.75px;font-weight:normal;color:#555;white-space:nowrap;">Implementado sin documentar</div>
<div style="position:absolute;left:1415.5px;top:793.71px;font-family:'Liberation Serif', serif;font-size:14.5px;line-height:14.5px;font-weight:normal;color:#555;white-space:nowrap;">Auditado</div>
<div style="position:absolute;left:1419.8px;top:831.81px;font-family:'Liberation Serif', serif;font-size:14.5px;line-height:14.5px;font-weight:normal;color:#555;white-space:nowrap;">Iniciado</div>
<div style="position:absolute;left:1415.5px;top:878.41px;font-family:'Liberation Serif', serif;font-size:14.5px;line-height:14.5px;font-weight:normal;color:#555;white-space:nowrap;">Auditado</div>
<div style="position:absolute;left:1419.8px;top:956.71px;font-family:'Liberation Serif', serif;font-size:14.5px;line-height:14.5px;font-weight:normal;color:#555;white-space:nowrap;">Iniciado</div>
<div style="position:absolute;left:1419.8px;top:999.71px;font-family:'Liberation Serif', serif;font-size:14.5px;line-height:14.5px;font-weight:normal;color:#555;white-space:nowrap;">Iniciado</div>
<div style="position:absolute;left:1687px;top:494.61px;font-family:'Liberation Serif', serif;font-size:14.5px;line-height:14.5px;font-weight:normal;color:#555;white-space:nowrap;">Iniciado</div>
<div style="position:absolute;left:1682.9px;top:537.21px;font-family:'Liberation Serif', serif;font-size:14.5px;line-height:14.5px;font-weight:normal;color:#555;white-space:nowrap;">Auditado</div>
<div style="position:absolute;left:1682.9px;top:582.91px;font-family:'Liberation Serif', serif;font-size:14.5px;line-height:14.5px;font-weight:normal;color:#555;white-space:nowrap;">Auditado</div>
<div style="position:absolute;left:1687px;top:621.71px;font-family:'Liberation Serif', serif;font-size:14.5px;line-height:14.5px;font-weight:normal;color:#555;white-space:nowrap;">Iniciado</div>
<div style="position:absolute;left:1682.9px;top:663.81px;font-family:'Liberation Serif', serif;font-size:14.5px;line-height:14.5px;font-weight:normal;color:#555;white-space:nowrap;">Auditado</div>
<div style="position:absolute;left:1682.9px;top:709.61px;font-family:'Liberation Serif', serif;font-size:14.5px;line-height:14.5px;font-weight:normal;color:#555;white-space:nowrap;">Auditado</div>
<div style="position:absolute;left:1683.9px;top:791.61px;font-family:'Liberation Serif', serif;font-size:14.5px;line-height:14.5px;font-weight:normal;color:#555;white-space:nowrap;">Auditado</div>
<div style="position:absolute;left:1676.6px;top:831.81px;font-family:'Liberation Serif', serif;font-size:14.5px;line-height:14.5px;font-weight:normal;color:#555;white-space:nowrap;">Planificado</div>
<div style="position:absolute;left:1600.7px;top:873.61px;font-family:'Liberation Serif', serif;font-size:14.75px;line-height:14.75px;font-weight:normal;color:#555;white-space:nowrap;">Implementado sin documentar</div>
<div style="position:absolute;left:1687px;top:957.51px;font-family:'Liberation Serif', serif;font-size:14.5px;line-height:14.5px;font-weight:normal;color:#555;white-space:nowrap;">Iniciado</div>
<div style="position:absolute;left:1687px;top:1000.81px;font-family:'Liberation Serif', serif;font-size:14.5px;line-height:14.5px;font-weight:normal;color:#555;white-space:nowrap;">Iniciado</div>
<div style="position:absolute;left:1840.4px;top:478.5px;width:11.9px;height:531.5px;background:#e1e8fd;border-radius:6px;"></div>
<div style="position:absolute;left:1842.8px;top:480.3px;width:7.2px;height:251.8px;background:#a9befb;border-radius:4px;"></div>
<div style="position:absolute;left:179px;top:1016.6px;width:1670.3px;height:11.8px;background:#e1e8fd;border-radius:6px;"></div>
<div style="position:absolute;left:179px;top:1018.5px;width:559px;height:7.5px;background:#a9befb;border-radius:4px;"></div></div></body></html>
